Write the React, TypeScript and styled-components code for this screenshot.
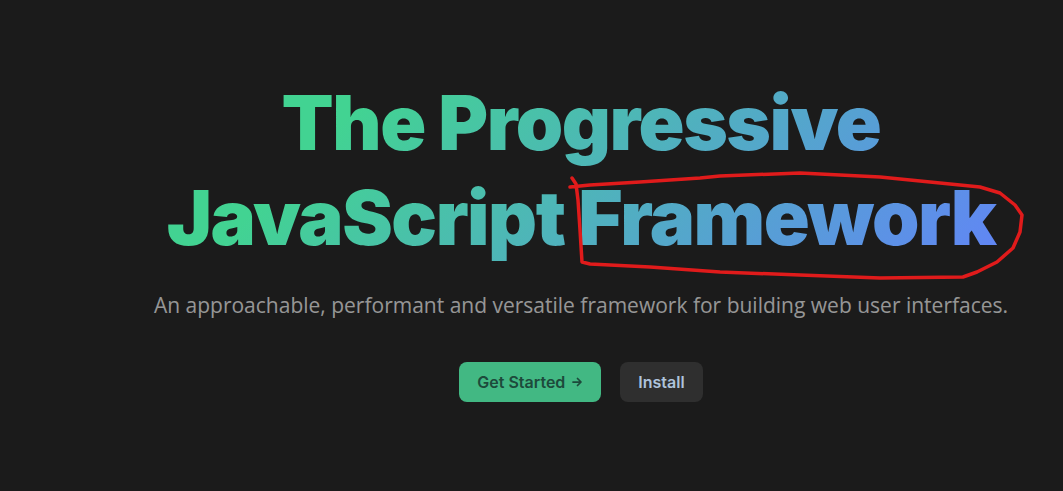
import React from "react";
import styled, { createGlobalStyle } from "styled-components";

const GlobalStyle = createGlobalStyle`
  html, body {
    margin: 0;
    padding: 0;
    background: #1b1b1b;
  }
  body {
    width: 1063px;
    height: 491px;
    overflow: hidden;
  }
`;

const Hero = styled.section`
  box-sizing: border-box;
  width: 1063px;
  height: 491px;
  padding: 75px 0 0 99px;
  display: flex;
  flex-direction: column;
  align-items: center;
  text-align: center;
`;

const TitleWrap = styled.div`
  position: relative;
  width: 960px;
`;

const Title = styled.h1`
  margin: 0;
  font-family: Inter, "Noto Sans", sans-serif;
  font-size: 76px;
  font-weight: 900;
  line-height: 95px;
  letter-spacing: -1.5px;
  background: linear-gradient(135deg, #42d392 25%, #647eff);
  -webkit-background-clip: text;
  background-clip: text;
  -webkit-text-fill-color: transparent;
  color: transparent;
`;

const Scribble = styled.svg`
  position: absolute;
  left: 0;
  top: 0;
  overflow: visible;
  pointer-events: none;
`;

const Description = styled.p`
  margin: 24px 0 40px;
  max-width: 960px;
  font-family: "Open Sans", "Noto Sans", sans-serif;
  font-size: 21px;
  line-height: 33px;
  color: rgba(235, 235, 235, 0.6);
`;

const Actions = styled.div`
  display: flex;
  gap: 19px;
`;

const Button = styled.a<{ $brand?: boolean }>`
  display: inline-flex;
  align-items: center;
  height: 40px;
  padding: 0 18px;
  border-radius: 8px;
  font-family: Inter, "Noto Sans", sans-serif;
  font-size: 16px;
  font-weight: 600;
  text-decoration: none;
  background: ${(p) => (p.$brand ? "#42b883" : "#2f2f2f")};
  color: ${(p) => (p.$brand ? "#1d4a3b" : "#aec3dc")};
  cursor: pointer;
`;

const Arrow = styled.svg`
  margin-left: 6px;
  width: 12px;
  height: 12px;
`;

const points = [
  [572, 178], [576, 184], [578, 200], [580, 230], [582, 262], [590, 264],
  [650, 267], [720, 272], [800, 275], [880, 278], [963, 277], [977, 272],
  [997, 262], [1013, 248], [1020, 232], [1022, 215], [1015, 205], [1000, 193],
  [980, 187], [930, 182], [880, 177], [800, 173], [720, 176], [700, 178],
  [640, 182], [590, 185], [570, 187],
];

export default function App() {
  const d = points.map(([x, y], i) => `${i ? "L" : "M"}${x - 101},${y - 75}`).join(" ");
  return (
    <>
      <GlobalStyle />
      <Hero>
        <TitleWrap>
          <Title>
            The Progressive
            <br />
            JavaScript Framework
          </Title>
          <Scribble width="960" height="220" viewBox="0 0 960 220">
            <path
              d={d}
              fill="none"
              stroke="#e01b1b"
              strokeWidth="3.5"
              strokeLinejoin="round"
              strokeLinecap="round"
            />
          </Scribble>
        </TitleWrap>
        <Description>
          An approachable, performant and versatile framework for building web user interfaces.
        </Description>
        <Actions>
          <Button $brand>
            Get Started
            <Arrow viewBox="0 0 24 24" fill="none" stroke="currentColor" strokeWidth="3.5" strokeLinecap="round" strokeLinejoin="round">
              <path d="M4 12h15M13 5l7 7-7 7" />
            </Arrow>
          </Button>
          <Button>Install</Button>
        </Actions>
      </Hero>
    </>
  );
}
